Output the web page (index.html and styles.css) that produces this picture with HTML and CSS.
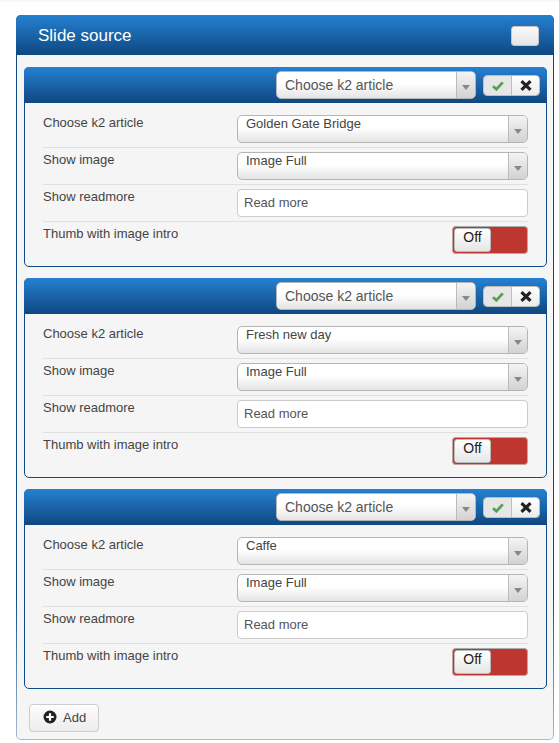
FILE: index.html
```html
<!DOCTYPE html>
<html lang="en">
<head>
    <meta charset="UTF-8">
    <title>Slide source</title>
    <link rel="stylesheet" href="styles.css">
</head>
<body>
    <div id="container">
        <div class="box">
            <div class="box-head">
                <h1>Slide source</h1>
                <button type="button" class="head-btn"></button>
            </div>
            <div class="box-body">
                <div class="item">
                    <div class="item-head">
                        <div class="select head-select"><span class="select-text">Choose k2 article</span><span class="select-arrow"></span></div>
                        <div class="btn-group">
                            <span class="btn-part active"><svg width="12" height="10" viewBox="0 0 12 10"><path d="M1 5.2 4.4 8.2 10.8 1.4" fill="none" stroke="#51a351" stroke-width="2.8"/></svg></span>
                            <span class="btn-part"><svg width="12" height="11" viewBox="0 0 12 11"><path d="M1.5 1.2 10.5 9.8M10.5 1.2 1.5 9.8" fill="none" stroke="#222" stroke-width="3.2"/></svg></span>
                        </div>
                    </div>
                    <ul class="fields">
                        <li>
                            <label class="field">Choose k2 article</label>
                            <div class="select"><span class="select-text">Golden Gate Bridge</span><span class="select-arrow"></span></div>
                        </li>
                        <li>
                            <label class="field">Show image</label>
                            <div class="select"><span class="select-text">Image Full</span><span class="select-arrow"></span></div>
                        </li>
                        <li>
                            <label class="field">Show readmore</label>
                            <input type="text" value="Read more">
                        </li>
                        <li>
                            <label class="field">Thumb with image intro</label>
                            <div class="toggle"><span class="toggle-knob">Off</span></div>
                        </li>
                    </ul>
                </div>
                <div class="item">
                    <div class="item-head">
                        <div class="select head-select"><span class="select-text">Choose k2 article</span><span class="select-arrow"></span></div>
                        <div class="btn-group">
                            <span class="btn-part active"><svg width="12" height="10" viewBox="0 0 12 10"><path d="M1 5.2 4.4 8.2 10.8 1.4" fill="none" stroke="#51a351" stroke-width="2.8"/></svg></span>
                            <span class="btn-part"><svg width="12" height="11" viewBox="0 0 12 11"><path d="M1.5 1.2 10.5 9.8M10.5 1.2 1.5 9.8" fill="none" stroke="#222" stroke-width="3.2"/></svg></span>
                        </div>
                    </div>
                    <ul class="fields">
                        <li>
                            <label class="field">Choose k2 article</label>
                            <div class="select"><span class="select-text">Fresh new day</span><span class="select-arrow"></span></div>
                        </li>
                        <li>
                            <label class="field">Show image</label>
                            <div class="select"><span class="select-text">Image Full</span><span class="select-arrow"></span></div>
                        </li>
                        <li>
                            <label class="field">Show readmore</label>
                            <input type="text" value="Read more">
                        </li>
                        <li>
                            <label class="field">Thumb with image intro</label>
                            <div class="toggle"><span class="toggle-knob">Off</span></div>
                        </li>
                    </ul>
                </div>
                <div class="item">
                    <div class="item-head">
                        <div class="select head-select"><span class="select-text">Choose k2 article</span><span class="select-arrow"></span></div>
                        <div class="btn-group">
                            <span class="btn-part active"><svg width="12" height="10" viewBox="0 0 12 10"><path d="M1 5.2 4.4 8.2 10.8 1.4" fill="none" stroke="#51a351" stroke-width="2.8"/></svg></span>
                            <span class="btn-part"><svg width="12" height="11" viewBox="0 0 12 11"><path d="M1.5 1.2 10.5 9.8M10.5 1.2 1.5 9.8" fill="none" stroke="#222" stroke-width="3.2"/></svg></span>
                        </div>
                    </div>
                    <ul class="fields">
                        <li>
                            <label class="field">Choose k2 article</label>
                            <div class="select"><span class="select-text">Caffe</span><span class="select-arrow"></span></div>
                        </li>
                        <li>
                            <label class="field">Show image</label>
                            <div class="select"><span class="select-text">Image Full</span><span class="select-arrow"></span></div>
                        </li>
                        <li>
                            <label class="field">Show readmore</label>
                            <input type="text" value="Read more">
                        </li>
                        <li>
                            <label class="field">Thumb with image intro</label>
                            <div class="toggle"><span class="toggle-knob">Off</span></div>
                        </li>
                    </ul>
                </div>
                <button type="button" class="add-btn">
                    <svg width="14" height="14" viewBox="0 0 14 14"><circle cx="7" cy="7" r="6.5" fill="#222"/><path d="M7 3.2v7.6M3.2 7h7.6" stroke="#fff" stroke-width="2.2"/></svg>
                    Add
                </button>
            </div>
        </div>
    </div>
</body>
</html>
```

FILE: styles.css
```css
html, body{
    margin: 0;
    padding: 0;
}
body{
    background: #fff;
    font-family: "Liberation Sans", Arial, sans-serif;
    font-size: 13px;
    color: #444;
}
#container{
    padding: 13px 5px 0 16px;
    border-top: 2px solid #f7f7f7;
    margin-bottom: 4px;
}
.box{
    width: 536px;
    border: 1px solid transparent;
    border-radius: 5px;
    background: linear-gradient(#f5f5f5, #f5f5f5) padding-box, linear-gradient(#0f4c86, #0f4c86 80%, #a9bccf) border-box;
}
.box-head{
    height: 40px;
    margin: -1px -1px 0;
    padding: 0 15px 0 22px;
    display: flex;
    align-items: center;
    justify-content: space-between;
    background: linear-gradient(#2581d1, #0f4781);
    border-radius: 5px 5px 0 0;
}
h1{
    margin: 2px 0 0;
    font-size: 17px;
    font-weight: normal;
    color: #fff;
}
.head-btn{
    width: 28px;
    height: 20px;
    margin-top: 1px;
    padding: 0;
    background: linear-gradient(#f8f8f8, #e6e6e6);
    border: 1px solid #c5c5c5;
    border-radius: 3px;
}
.box-body{
    padding: 12px 6px 7px 7px;
}
.item{
    background: #f5f5f5;
    border: 1px solid #0f4c86;
    border-radius: 5px;
    margin-bottom: 11px;
    height: 200px;
    box-sizing: border-box;
}
.item-head{
    height: 36px;
    margin: -1px -1px 0;
    padding: 4px 7px 0 0;
    box-sizing: border-box;
    display: flex;
    justify-content: flex-end;
    background: linear-gradient(#2581d1, #0f4781);
    border-radius: 5px 5px 0 0;
}
.select{
    display: flex;
    width: 291px;
    height: 28px;
    box-sizing: border-box;
    background: linear-gradient(#fff 45%, #e4e4e4);
    border: 1px solid #b5b5b5;
    border-radius: 5px;
}
.select-text{
    flex: 1;
    padding-left: 8px;
    line-height: 15px;
    color: #444;
}
.select-arrow{
    width: 18px;
    position: relative;
    background: linear-gradient(#f4f4f4, #d2d2d2);
    border-left: 1px solid #bbb;
    border-radius: 0 4px 4px 0;
}
.select-arrow::after{
    content: "";
    position: absolute;
    left: 5px;
    top: 13px;
    border: 4px solid transparent;
    border-top: 5px solid #888;
    border-bottom: 0;
}
.head-select{
    width: 200px;
    margin-right: 7px;
}
.head-select .select-text{
    font-size: 14px;
    line-height: 26px;
    color: #555;
}
.btn-group{
    display: flex;
    height: 19px;
    margin-top: 4px;
    border: 1px solid #bdbdbd;
    border-radius: 4px;
    overflow: hidden;
}
.btn-part{
    width: 27px;
    display: flex;
    align-items: center;
    justify-content: center;
    background: linear-gradient(#fff, #ececec);
}
.btn-part.active{
    background: #e6e6e6;
    border-right: 1px solid #bdbdbd;
}
.fields{
    list-style: none;
    margin: 0;
    padding: 0 18px;
}
.fields li{
    display: flex;
    height: 37px;
    box-sizing: border-box;
    padding-top: 4px;
    border-top: 1px solid #e0e0e0;
}
.fields li:first-child{
    border-top: 0;
    height: 44px;
    padding-top: 12px;
}
.field{
    width: 194px;
    line-height: 15px;
}
.fields input{
    width: 291px;
    height: 28px;
    box-sizing: border-box;
    border: 1px solid #ccc;
    border-radius: 4px;
    padding: 0 6px 2px;
    background: #fff;
    font: 13px "Liberation Sans", Arial, sans-serif;
    color: #555;
}
.toggle{
    width: 76px;
    height: 28px;
    margin-left: auto;
    box-sizing: border-box;
    background: #bd362f;
    border: 1px solid #c9a09d;
    border-top-color: #aaa;
    border-radius: 4px;
    padding: 1px;
}
.toggle-knob{
    display: block;
    width: 37px;
    height: 24px;
    box-sizing: border-box;
    background: linear-gradient(#fff, #e6e6e6);
    border: 1px solid #bbb;
    border-radius: 3px;
    text-align: center;
    font-size: 14px;
    line-height: 16px;
    color: #222;
}
.add-btn{
    display: flex;
    align-items: center;
    gap: 6px;
    margin: 15px 0 0 5px;
    width: 70px;
    height: 28px;
    padding: 0 0 2px 13px;
    background: linear-gradient(#fdfdfd, #ececec);
    border: 1px solid #ccc;
    border-radius: 4px;
    font: 13px "Liberation Sans", Arial, sans-serif;
    color: #444;
}
```
